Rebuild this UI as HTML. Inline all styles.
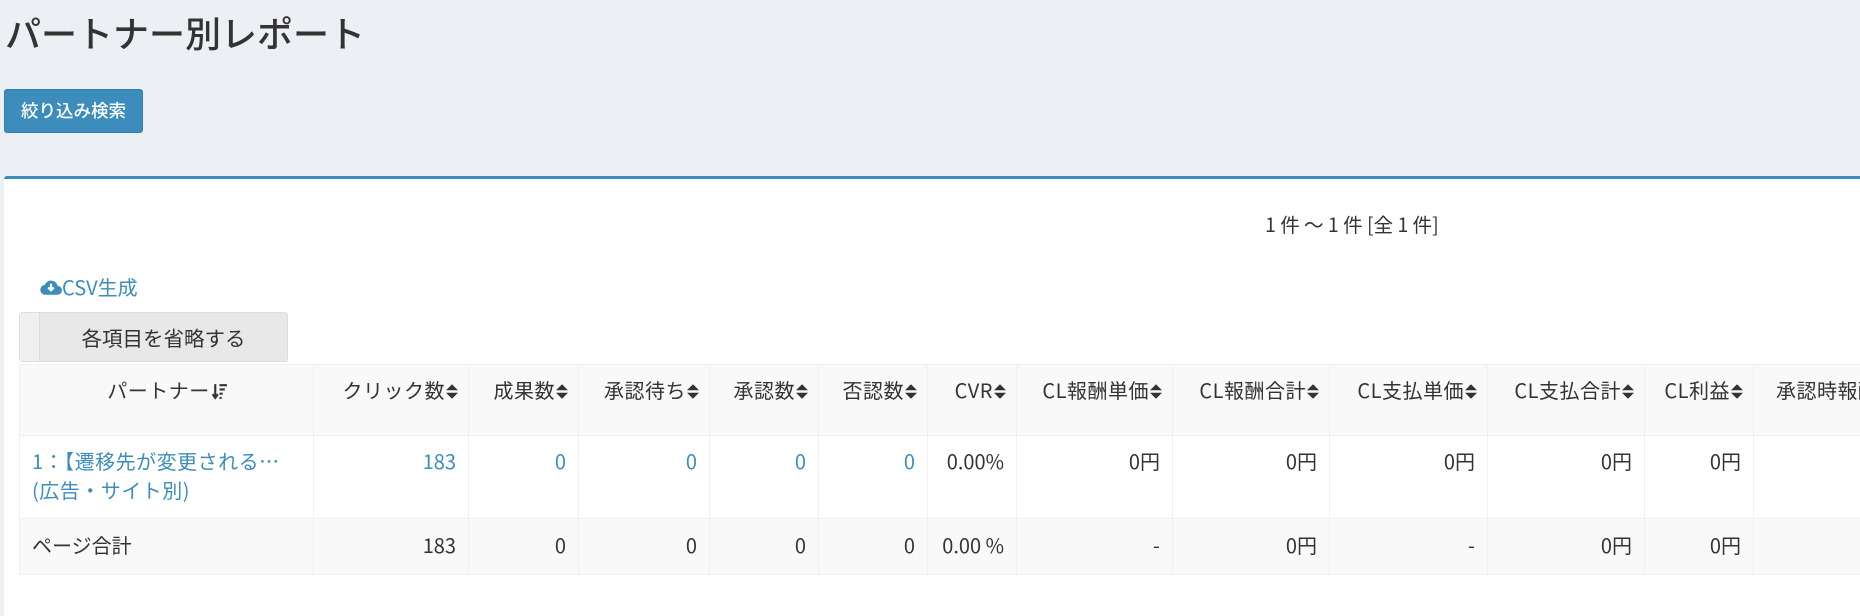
<!DOCTYPE html>
<html><head><meta charset="utf-8">
<style>
*{box-sizing:border-box;margin:0;padding:0}
html,body{width:1860px;height:596px;overflow:hidden;background:#ecf0f5;font-family:"Liberation Sans","Noto Sans CJK JP",sans-serif;color:#333}
h1{position:absolute;left:5px;top:6px;font-size:36px;font-weight:500;font-family:"Noto Sans CJK JP",sans-serif;color:#333}
.btn{position:absolute;left:4px;top:89px;width:139px;height:44px;background:#3c8dbc;border:1px solid #367fa9;border-radius:3px;color:#fff;font-size:17.5px;font-family:"Noto Sans CJK JP",sans-serif;font-weight:500;line-height:42px;text-align:center}
.box{position:absolute;left:4px;top:176px;width:1900px;height:440px;background:#fff;border-top:3px solid #3c8dbc;border-radius:3px 0 0 0}
.count{position:absolute;left:1265px;top:209px;font-size:19.5px;font-family:"Noto Sans CJK JP",sans-serif}
.csv{position:absolute;left:40px;top:272px;font-size:20px;color:#3c8dbc;font-family:"Noto Sans CJK JP",sans-serif;display:flex;align-items:center}
.omit{position:absolute;left:19px;top:312px;width:269px;height:50px;background:#e8e8e8;border:1px solid #ddd;border-radius:3px;font-size:20.5px;font-family:"Noto Sans CJK JP",sans-serif;line-height:48px;text-align:center;padding-left:20px}
.omit:before{content:"";position:absolute;left:0;top:0;width:19px;height:48px;background:#f0f0f0;border-right:1px solid #ddd}
table{position:absolute;left:19px;top:364px;border-collapse:collapse;table-layout:fixed;width:1900px;font-size:20px;font-family:"Noto Sans CJK JP",sans-serif}
td,th{border:1px solid #f0f0f0;padding:0 12px;vertical-align:top;font-weight:400;white-space:nowrap;overflow:hidden}
thead tr{height:71px;background:#f9f9f9}
th{text-align:right;padding-top:10px;padding-right:10px;letter-spacing:0.5px}
tr.d{height:83px}
tr.d td{padding-top:10px;line-height:29px;color:#3c8dbc;text-align:right}
tr.t{height:56px;background:#f9f9f9}
tr.t td{padding-top:11px;text-align:right}
.s{display:inline-block;width:12px;height:17px;vertical-align:-2px;margin-left:1px}
</style></head><body>
<h1>パートナー別レポート</h1>
<div class="btn">絞り込み検索</div>
<div class="box"></div>
<div class="count">1 件 ～ 1 件 [全 1 件]</div>
<div class="csv"><svg width="22" height="18" viewBox="0 0 20 16"><path d="M5 15h11a4 4 0 0 0 0-8 6 6 0 0 0-11.5-1A4.5 4.5 0 0 0 5 15z" fill="#3c8dbc"/><path d="M10 5v6M7.5 8.5l2.5 2.5 2.5-2.5" stroke="#fff" stroke-width="2" fill="none"/></svg>CSV生成</div>
<div class="omit">各項目を省略する</div>
<table>
<colgroup><col style="width:294px"><col style="width:155px"><col style="width:110px"><col style="width:131px"><col style="width:109px"><col style="width:109px"><col style="width:89px"><col style="width:156px"><col style="width:157px"><col style="width:158px"><col style="width:157px"><col style="width:109px"><col style="width:176px"></colgroup>
<thead><tr>
<th style="text-align:center">パートナー<svg class="s" style="width:17px" viewBox="0 0 14 16"><path d="M3 1v12M0.5 10.5L3 14l2.5-3.5" stroke="#333" stroke-width="2" fill="none"/><path d="M7 2h7M7 6h5M7 10h3M7 14h2" stroke="#333" stroke-width="2"/></svg></th>
<th>クリック数<svg class="s" viewBox="0 0 10 14"><path d="M0 6L5 1l5 5zM0 8l5 5 5-5z" fill="#333"/></svg></th>
<th>成果数<svg class="s" viewBox="0 0 10 14"><path d="M0 6L5 1l5 5zM0 8l5 5 5-5z" fill="#333"/></svg></th>
<th>承認待ち<svg class="s" viewBox="0 0 10 14"><path d="M0 6L5 1l5 5zM0 8l5 5 5-5z" fill="#333"/></svg></th>
<th>承認数<svg class="s" viewBox="0 0 10 14"><path d="M0 6L5 1l5 5zM0 8l5 5 5-5z" fill="#333"/></svg></th>
<th>否認数<svg class="s" viewBox="0 0 10 14"><path d="M0 6L5 1l5 5zM0 8l5 5 5-5z" fill="#333"/></svg></th>
<th>CVR<svg class="s" viewBox="0 0 10 14"><path d="M0 6L5 1l5 5zM0 8l5 5 5-5z" fill="#333"/></svg></th>
<th>CL報酬単価<svg class="s" viewBox="0 0 10 14"><path d="M0 6L5 1l5 5zM0 8l5 5 5-5z" fill="#333"/></svg></th>
<th>CL報酬合計<svg class="s" viewBox="0 0 10 14"><path d="M0 6L5 1l5 5zM0 8l5 5 5-5z" fill="#333"/></svg></th>
<th>CL支払単価<svg class="s" viewBox="0 0 10 14"><path d="M0 6L5 1l5 5zM0 8l5 5 5-5z" fill="#333"/></svg></th>
<th>CL支払合計<svg class="s" viewBox="0 0 10 14"><path d="M0 6L5 1l5 5zM0 8l5 5 5-5z" fill="#333"/></svg></th>
<th>CL利益<svg class="s" viewBox="0 0 10 14"><path d="M0 6L5 1l5 5zM0 8l5 5 5-5z" fill="#333"/></svg></th>
<th style="text-align:left;padding-left:22px">承認時報酬</th>
</tr></thead>
<tbody>
<tr class="d"><td style="text-align:left;letter-spacing:0.5px">1：【遷移先が変更される…<br>(広告・サイト別)</td><td>183</td><td>0</td><td>0</td><td>0</td><td>0</td><td style="color:#333">0.00%</td><td style="color:#333">0円</td><td style="color:#333">0円</td><td style="color:#333">0円</td><td style="color:#333">0円</td><td style="color:#333">0円</td><td></td></tr>
<tr class="t"><td style="text-align:left">ページ合計</td><td>183</td><td>0</td><td>0</td><td>0</td><td>0</td><td>0.00 %</td><td>-</td><td>0円</td><td>-</td><td>0円</td><td>0円</td><td></td></tr>
</tbody></table>
</body></html>
